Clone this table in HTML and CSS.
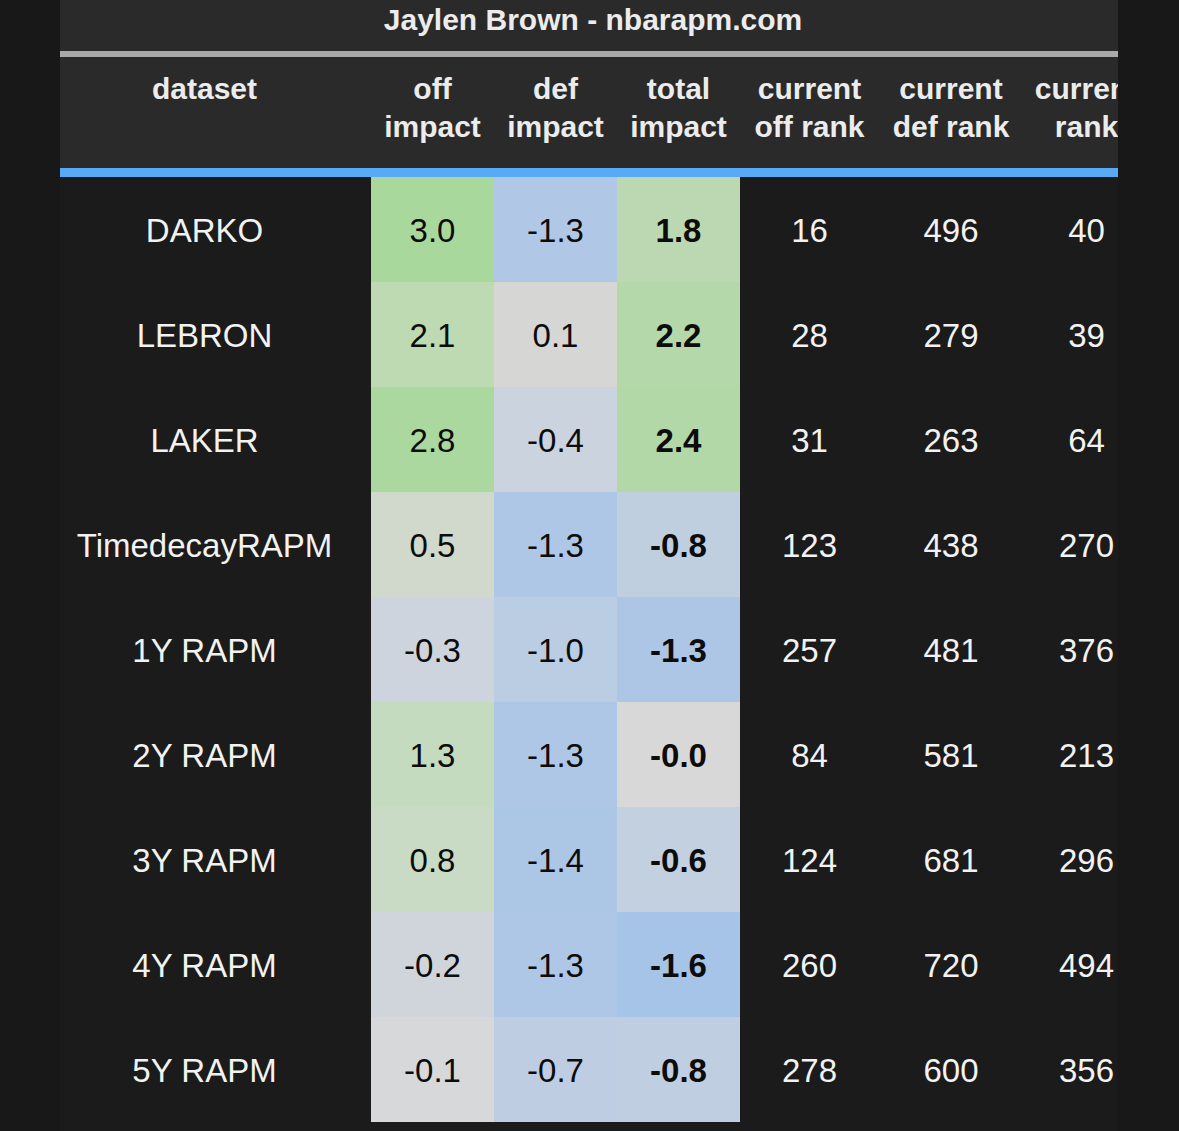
FILE: index.html
```html
<!DOCTYPE html>
<html lang="en">
<head>
<meta charset="utf-8">
<title>Jaylen Brown - nbarapm.com</title>
<link rel="stylesheet" href="styles.css">
</head>
<body>
<div class="frame">
  <div class="title">Jaylen Brown - nbarapm.com</div>
  <table class="stats">
    <colgroup>
      <col class="c-name">
      <col class="c-imp">
      <col class="c-imp">
      <col class="c-imp">
      <col class="c-off">
      <col class="c-def">
      <col class="c-rank">
    </colgroup>
    <thead>
      <tr>
        <th class="name">dataset</th>
        <th>off<br>impact</th>
        <th>def<br>impact</th>
        <th>total<br>impact</th>
        <th>current<br>off rank</th>
        <th>current<br>def rank</th>
        <th>current<br>rank</th>
      </tr>
    </thead>
    <tbody>
      <tr>
        <td class="name">DARKO</td>
        <td class="heat" style="background:#a9d89c">3.0</td>
        <td class="heat" style="background:#b0c8e6">-1.3</td>
        <td class="heat total" style="background:#bcd8b3">1.8</td>
        <td>16</td><td>496</td><td>40</td>
      </tr>
      <tr>
        <td class="name">LEBRON</td>
        <td class="heat" style="background:#bddab3">2.1</td>
        <td class="heat" style="background:#d6d7d5">0.1</td>
        <td class="heat total" style="background:#b5d8aa">2.2</td>
        <td>28</td><td>279</td><td>39</td>
      </tr>
      <tr>
        <td class="name">LAKER</td>
        <td class="heat" style="background:#abd89f">2.8</td>
        <td class="heat" style="background:#cbd3de">-0.4</td>
        <td class="heat total" style="background:#b3d8a7">2.4</td>
        <td>31</td><td>263</td><td>64</td>
      </tr>
      <tr>
        <td class="name">TimedecayRAPM</td>
        <td class="heat" style="background:#d0d9cc">0.5</td>
        <td class="heat" style="background:#aec7e6">-1.3</td>
        <td class="heat total" style="background:#c0cfe0">-0.8</td>
        <td>123</td><td>438</td><td>270</td>
      </tr>
      <tr>
        <td class="name">1Y RAPM</td>
        <td class="heat" style="background:#cdd4de">-0.3</td>
        <td class="heat" style="background:#bbcde3">-1.0</td>
        <td class="heat total" style="background:#adc6e6">-1.3</td>
        <td>257</td><td>481</td><td>376</td>
      </tr>
      <tr>
        <td class="name">2Y RAPM</td>
        <td class="heat" style="background:#c5dbbf">1.3</td>
        <td class="heat" style="background:#aec7e6">-1.3</td>
        <td class="heat total" style="background:#d8d8d8">-0.0</td>
        <td>84</td><td>581</td><td>213</td>
      </tr>
      <tr>
        <td class="name">3Y RAPM</td>
        <td class="heat" style="background:#cadbc5">0.8</td>
        <td class="heat" style="background:#acc6e6">-1.4</td>
        <td class="heat total" style="background:#c3d0e0">-0.6</td>
        <td>124</td><td>681</td><td>296</td>
      </tr>
      <tr>
        <td class="name">4Y RAPM</td>
        <td class="heat" style="background:#d0d5dc">-0.2</td>
        <td class="heat" style="background:#aec7e6">-1.3</td>
        <td class="heat total" style="background:#a6c3e8">-1.6</td>
        <td>260</td><td>720</td><td>494</td>
      </tr>
      <tr>
        <td class="name">5Y RAPM</td>
        <td class="heat" style="background:#d6d8da">-0.1</td>
        <td class="heat" style="background:#bfcde2">-0.7</td>
        <td class="heat total" style="background:#c0cee2">-0.8</td>
        <td>278</td><td>600</td><td>356</td>
      </tr>
    </tbody>
  </table>
</div>
</body>
</html>
```

FILE: styles.css
```css
html, body {
  margin: 0;
  padding: 0;
  background: #181818;
}

body {
  font-family: "Liberation Sans", Arial, Helvetica, sans-serif;
  color: #f0f0f0;
}

.frame {
  margin-left: 60px;
  width: 1058px;
  height: 1131px;
  overflow: hidden;
  background: #1b1b1b;
}

.title {
  box-sizing: border-box;
  height: 57px;
  padding: 1px 0 0 8px;
  background: #2a2a2a;
  border-bottom: 6px solid #a9a9a9;
  text-align: center;
  font-size: 30px;
  line-height: 38px;
  font-weight: bold;
  color: #ececec;
}

.stats {
  border-collapse: separate;
  border-spacing: 0;
  table-layout: fixed;
  width: 1090px;
}

.c-name { width: 311px; }
.c-imp { width: 123px; }
.c-off { width: 139px; }
.c-def { width: 144px; }
.c-rank { width: 127px; }

.stats th {
  box-sizing: border-box;
  height: 120px;
  padding: 13px 0 21px;
  background: #2a2a2a;
  border-bottom: 9px solid #58aaf5;
  vertical-align: top;
  font-size: 30px;
  line-height: 38px;
  font-weight: bold;
  color: #ececec;
  text-align: center;
  white-space: nowrap;
}

.stats tbody tr {
  height: 105px;
}

.stats td {
  padding: 3px 0 0;
  vertical-align: middle;
  text-align: center;
  font-size: 33px;
  line-height: 40px;
  color: #f2f2f2;
  white-space: nowrap;
}

.stats th.name,
.stats td.name {
  padding-right: 22px;
}

.stats td.heat {
  color: #0c0c0c;
}

.stats td.total {
  font-weight: bold;
}
```
